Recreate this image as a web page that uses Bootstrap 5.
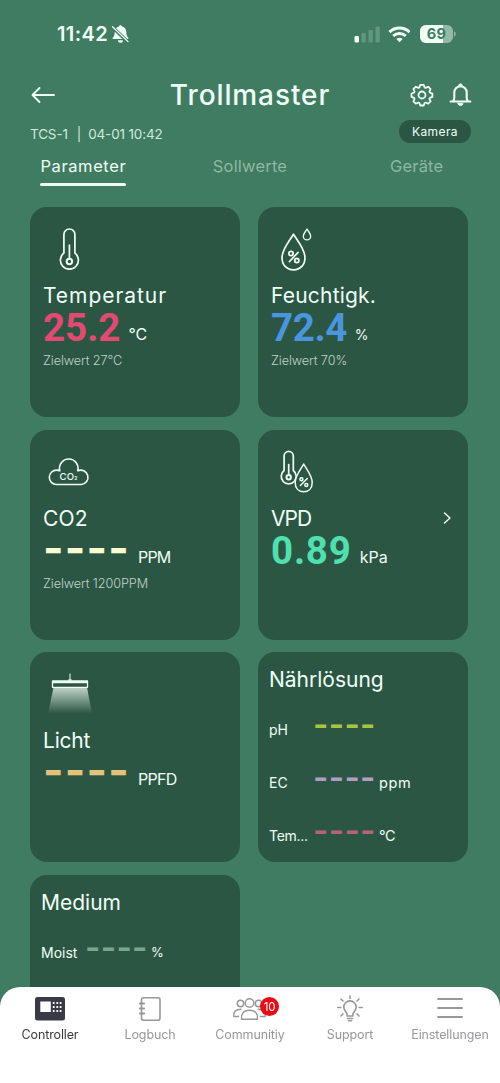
<!DOCTYPE html>
<html lang="de">
<head>
<meta charset="utf-8">
<meta name="viewport" content="width=device-width, initial-scale=1">
<title>Trollmaster</title>
<link href="https://cdn.jsdelivr.net/npm/bootstrap@5.3.0/dist/css/bootstrap.min.css" rel="stylesheet">
<style>
  body{background:#407c61;color:#effff6;font-family:Inter,"Open Sans",sans-serif;height:1083px;overflow:hidden}
  svg{display:block;flex:none;fill:none;stroke:currentColor;stroke-linecap:round;stroke-linejoin:round}
  .statusbar{height:68px;padding:0 45px 0 57px}
  .clock{font-size:20px;font-weight:600;letter-spacing:.4px}
  .topbar{height:53px;display:grid;grid-template-columns:1fr auto 1fr;padding:0 28px 0 28px}
  .topbar h1{font-size:28px;font-weight:500;letter-spacing:.9px;line-height:1}
  .inforow{height:23px;margin-top:-1px;padding:0 29px 0 30px}
  .device{font-size:13.5px;color:#cfeadb;letter-spacing:-.15px;padding-top:6px}
  .pill{background:#2c5644;font-size:12px;letter-spacing:.4px;width:72px;height:23px}
  .tabs{height:64px;font-size:16.5px;color:#8db8a1}
  .tabs .nav-link{color:inherit;padding:11px 0 0;line-height:25px;letter-spacing:.2px}
  .tabs .nav-link.active{color:#effff6;letter-spacing:.6px}
  .tabs .nav-link.active::after{content:"";display:block;height:3px;width:86px;margin:4px auto 0;border-radius:2px;background:#effff6}
  .tiles{display:grid;grid-template-columns:210px 210px;grid-auto-rows:210px;gap:12.6px 18px;padding-left:30px}
  .tile{background:#2c5644;border-radius:17px;padding-left:13px}
  .tile.listed{padding-left:11px}
  .pict{height:76px;padding-top:13px}
  .tile h2{font-size:21px;font-weight:400;line-height:25px;margin:0}
  .tile.listed h2{padding-top:15px;margin-bottom:24px}
  .figure-row{height:40px;line-height:40px;font-size:37.5px;white-space:nowrap}
  .num{font-family:Roboto,Inter,sans-serif;font-size:38.5px;font-weight:700;line-height:0}
  .dashes{display:inline-block;width:87px;font-size:44px;font-weight:700;line-height:0;letter-spacing:1.150px}
  .unit{font-size:16px;margin-left:8px;line-height:0;position:relative;top:-1px}
  .goal{font-size:12.7px;font-weight:350;line-height:20px;margin-top:3px;color:#bdd3c7;letter-spacing:-.1px}
  .probe{height:26px;margin-bottom:26.7px;font-size:14px;line-height:27px}
  .probe .lab{width:44px}
  .probe .thin{font-size:33px;font-weight:600;width:63px;white-space:nowrap;line-height:17px;letter-spacing:.35px}
  .probe .u{font-size:14.5px;margin-left:3px}
  .appnav{height:96px;background:#fff;border-radius:20px 20px 0 0;color:#98989b}
  .appnav .nav-link{color:inherit;padding:7px 0 0;font-size:12.5px;line-height:20px;letter-spacing:-.12px}
  .appnav .nav-link.active{color:#3a3a40}
  .appnav svg{margin:0 auto 1px}
  .count{background:#ea0b14;color:#fff;width:19px;height:19px;left:calc(50% + 10px);top:10px;font-size:11.5px;letter-spacing:-.2px}
</style>
</head>
<body>
<div class="statusbar d-flex align-items-center">
  <span class="clock">11:42</span>
  <svg style="margin-left:3px" width="19" height="20" viewBox="0 0 19 20"><path d="M9.500 1.200a1.700 1.700 0 0 1 1.600 1.300c2.800.7 4.200 2.700 4.200 5.500 0 3 .7 4.400 2 5.800v1.200H1.700v-1.200c1.400-1.400 2-2.800 2-5.800 0-2.800 1.600-4.800 4.200-5.500A1.700 1.700 0 0 1 9.500 1.200zM7 16.300h5a2.500 2.500 0 0 1-5 0z" fill="currentColor" stroke="none"/><path d="M1.500 3.200 17 18" stroke="#407c61" stroke-width="3.400"/><path d="M1.500 2.800 17 17.600" stroke-width="1.300"/></svg>
  <svg class="ms-auto" width="26" height="18" viewBox="0 0 26 18"><g fill="currentColor" stroke="none"><rect x="0.500" y="11" width="4.500" height="6.500" rx="1.200"/><g opacity=".2"><rect x="7.500" y="8" width="4.300" height="9.500" rx="1.200"/><rect x="14.500" y="5" width="4.300" height="12.500" rx="1.200"/><rect x="21.500" y="1.500" width="4.300" height="16" rx="1.200"/></g></g></svg>
  <svg style="margin-left:8px" width="23" height="17" viewBox="0 0 22 17" stroke-width="2.900"><path d="M1 6.100a14.300 14.300 0 0 1 20 0M4.700 10a9 9 0 0 1 12.600 0" stroke-linecap="butt"/><path d="M11 16.300 7.900 13.100a4.500 4.500 0 0 1 6.200 0z" fill="currentColor" stroke="none"/></svg>
  <svg style="margin-left:9px;margin-right:-1px" width="36" height="18" viewBox="0 0 36 18"><g stroke="none"><path d="M6 0h21a6 6 0 0 1 6 6v6a6 6 0 0 1-6 6H6a6 6 0 0 1-6-6V6a6 6 0 0 1 6-6z" fill="#94b9a6"/><path d="M6 0h17v18H6a6 6 0 0 1-6-6V6a6 6 0 0 1 6-6z" fill="#effff6"/><path d="M34 6.300c2.200.6 2.200 4.800 0 5.400z" fill="#94b9a6"/><text x="16.600" y="14.300" text-anchor="middle" font-size="14.500" font-weight="650" letter-spacing=".4" fill="#407c61">69</text></g></svg>
</div>

<header class="topbar align-items-center">
  <svg style="margin-left:3px" width="24" height="18" viewBox="0 0 24 18" stroke-width="1.900"><path d="M23 9H1.500M8.500 2 1.500 9l7 7"/></svg>
  <h1 class="m-0">Trollmaster</h1>
  <div class="d-flex justify-content-end">
    <svg width="24" height="24" viewBox="0 0 24 24" stroke-width="1.800"><circle cx="12" cy="12" r="3.500"/><path d="M10.300 1.800h3.400l.9 2.600 1.100.5 2.500-1.200 2.400 2.400-1.200 2.500.5 1.100 2.500.8v3.400l-2.500.9-.5 1.100 1.200 2.400-2.400 2.400-2.500-1.200-1.100.5-.9 2.500h-3.400l-.9-2.500-1.100-.5-2.500 1.200-2.400-2.400 1.200-2.400-.5-1.100-2.600-.9v-3.400l2.600-.8.5-1.100-1.200-2.500 2.400-2.400 2.500 1.200 1.100-.5z"/></svg>
    <svg style="margin-left:15px" width="23" height="24" viewBox="0 0 23 24" stroke-width="2.100"><path d="M1.600 18.500h19.800M4 18.300c.9-1.200 1.300-2 1.300-3.500V9.500a6.200 6.200 0 0 1 12.400 0v5.300c0 1.500.4 2.300 1.300 3.500"/><path d="M9.700 2.600a1.800 1.800 0 0 1 3.600 0zM9 20.300h5a2.500 2.300 0 0 1-5 0z" fill="currentColor" stroke-width=".8"/></svg>
  </div>
</header>

<div class="inforow d-flex justify-content-between">
  <div class="device lh-1 d-flex align-items-center"><span>TCS-1</span><span style="margin:0 7px 0 9px">|</span><span>04-01 10:42</span></div>
  <span class="pill rounded-pill d-flex align-items-center justify-content-center">Kamera</span>
</div>

<nav class="tabs nav row g-0 text-center">
  <a class="nav-link active col-4">Parameter</a>
  <a class="nav-link col-4">Sollwerte</a>
  <a class="nav-link col-4">Geräte</a>
</nav>

<main class="tiles">
  <section class="tile">
    <div class="pict"><svg width="56" height="60" viewBox="0 0 56 60" stroke-width="1.700"><path d="M20.900 33V14.500a5.500 5.500 0 0 1 11 0V33a9 9 0 1 1-11 0z"/><path d="M26.400 25v12.500"/><circle cx="26.400" cy="41.500" r="2.700" stroke-width="2"/></svg></div>
    <h2 style="letter-spacing:.95px">Temperatur</h2>
    <div class="figure-row"><span class="num" style="color:#e44a71">25.2</span><span class="unit">°C</span></div>
    <div class="goal">Zielwert 27°C</div>
  </section>

  <section class="tile">
    <div class="pict"><svg width="56" height="60" viewBox="0 0 56 60" stroke-width="1.700"><path d="M22.500 14.200C26.500 21 34 29 34 37.800c0 7-4.500 12-11.500 12s-11.500-5-11.500-12C11 29 18.500 21 22.500 14.200z"/><path d="M36 9c1.200 2.500 3.700 4.400 3.700 7.200a3.700 3.700 0 0 1-7.400 0C32.300 13.400 34.800 11.500 36 9z" stroke-width="1.300"/><g stroke-width="1.800"><circle cx="20" cy="33.500" r="2.100"/><circle cx="25.800" cy="40.600" r="2.100"/><path d="M27 32.500 18.500 41.500"/></g></svg></div>
    <h2 style="letter-spacing:.2px">Feuchtigk.</h2>
    <div class="figure-row"><span class="num" style="color:#4a95df;letter-spacing:-.4px">72.4</span><span class="unit" style="font-size:14px">%</span></div>
    <div class="goal">Zielwert 70%</div>
  </section>

  <section class="tile">
    <div class="pict"><svg width="56" height="60" viewBox="0 0 56 60" stroke-width="1.600"><path d="M13.500 41.500a7.200 7.200 0 0 1 0-14.400c1.200 0 2.300.2 3.300.7a9.300 9.300 0 1 1 17.900 0 7.200 7.200 0 1 1 3.600 13.700z"/><text x="16.600" y="37" font-size="9.600" font-weight="500" fill="currentColor" stroke="none">CO</text><text x="31.200" y="36.500" font-size="5" font-weight="700" fill="currentColor" stroke="none">2</text></svg></div>
    <h2 style="letter-spacing:.2px">CO2</h2>
    <div class="figure-row"><span class="dashes" style="color:#fbfbd2">----</span><span class="unit" style="letter-spacing:-.8px">PPM</span></div>
    <div class="goal">Zielwert 1200PPM</div>
  </section>

  <section class="tile">
    <div class="pict"><svg width="56" height="60" viewBox="0 0 56 60" stroke-width="1.700"><path d="M13.100 27.500V13a4.600 4.600 0 0 1 9.200 0v14.500a7.500 7.500 0 1 1-9.200 0z"/><path d="M17.700 21.500v10"/><circle cx="17.700" cy="34.200" r="2.200" stroke-width="2"/><path d="M32.700 21c2.700 5.200 8.500 11.200 8.500 18.500 0 5.700-3.300 9.300-8.500 9.300s-8.500-3.600-8.500-9.300C24.200 32.200 30 26.200 32.700 21z" fill="#2c5644" stroke-width="1.500"/><g stroke-width="1.500"><circle cx="30.400" cy="36.200" r="1.500"/><circle cx="35.300" cy="42" r="1.500"/><path d="M36.300 35.500 29.400 42.500"/></g></svg></div>
    <div class="d-flex align-items-center justify-content-between"><h2 style="letter-spacing:-1px">VPD</h2><svg style="margin-right:16px" width="10" height="14" viewBox="0 0 10 14" stroke-width="1.400"><path d="M2.500 2 8 7l-5.500 5"/></svg></div>
    <div class="figure-row"><span class="num" style="color:#4fe0b0;letter-spacing:.8px">0.89</span><span class="unit">kPa</span></div>
  </section>

  <section class="tile">
    <div class="pict"><svg width="56" height="60" viewBox="0 0 56 60" stroke-width="1.500"><defs><linearGradient id="beam" x1="0" y1="0" x2="0" y2="1"><stop offset="0" stop-color="#e8f5ee" stop-opacity=".78"/><stop offset="1" stop-color="#e8f5ee" stop-opacity="0"/></linearGradient></defs><path d="M10.500 22.500h33.500L49 48.500H5z" fill="url(#beam)" stroke="none"/><path d="M9.500 16h35v6.300h-35zM10 17.500h34" stroke-width="1.300"/><path d="M27 9v6M25.500 15h3" stroke-width="1"/></svg></div>
    <h2 style="letter-spacing:-.2px">Licht</h2>
    <div class="figure-row"><span class="dashes" style="color:#e3c377">----</span><span class="unit" style="letter-spacing:-.7px">PPFD</span></div>
  </section>

  <section class="tile listed">
    <h2>Nährlösung</h2>
    <div class="probe d-flex"><span class="lab">pH</span><span class="thin" style="color:#a9c63a">----</span></div>
    <div class="probe d-flex"><span class="lab">EC</span><span class="thin" style="color:#b39cc3">----</span><span class="u" style="letter-spacing:.6px">ppm</span></div>
    <div class="probe d-flex"><span class="lab" style="letter-spacing:-.3px">Tem...</span><span class="thin" style="color:#b5637a">----</span><span class="u" style="letter-spacing:-.5px">°C</span></div>
  </section>

  <section class="tile listed">
    <h2>Medium</h2>
    <div class="probe d-flex"><span class="lab">Moist</span><span class="thin" style="color:#7ba68d">----</span><span class="u" style="font-size:13px">%</span></div>
  </section>
</main>

<nav class="appnav nav fixed-bottom row g-0 text-center flex-nowrap">
  <a class="nav-link active col">
    <svg width="30" height="30" viewBox="0 0 30 30"><g stroke="none"><rect x="0" y="3" width="30" height="23.500" rx="2.500" fill="#3a3a44"/><path d="M5.300 7.500h10.500v10.500H5.300z" fill="#fff"/></g><path d="M18.700 8v10M22.300 8v10M25.600 8v10" stroke="#fff" stroke-width="1.700" stroke-linecap="butt" stroke-dasharray="2 2"/></svg>Controller</a>
  <a class="nav-link col">
    <svg width="30" height="30" viewBox="0 0 30 30" stroke-width="1.600"><rect x="6.500" y="3.800" width="18.500" height="22.400" rx="2"/><path d="M4.800 9.500h4.400M4.800 14.500h4.400M4.800 19.500h4.400" stroke-width="1.800"/></svg>Logbuch</a>
  <a class="nav-link col position-relative">
    <svg width="36" height="30" viewBox="0 0 36 30" stroke-width="1.500"><circle cx="8.500" cy="9.500" r="3.200"/><circle cx="17.500" cy="9" r="4.300"/><circle cx="26.500" cy="9.500" r="3.200"/><path d="M9.500 25.200c-.5-5.500 2-9 8-9s8.500 3.500 8 9zM6.500 22.500H1.800c-.5-5 2-7.300 7-7.300M28.500 22.500h4.700c.5-5-2-7.300-7-7.300"/></svg>Communitiy
    <span class="count position-absolute rounded-circle d-flex align-items-center justify-content-center">10</span></a>
  <a class="nav-link col">
    <svg width="30" height="30" viewBox="0 0 30 30" stroke-width="1.600"><path d="M12.200 22v-1.500c0-2-3.400-3.600-3.400-7.400a6.200 6.200 0 0 1 12.400 0c0 3.800-3.400 5.400-3.400 7.400V22z"/><path d="M12.700 24.500h4.600M13.500 26.800h3M15 2v2.500M2.800 13.500h3M24.200 13.500h3M6 5l2 2M24 5l-2 2M6 22l2-2.200M24 22l-2-2.200"/></svg>Support</a>
  <a class="nav-link col">
    <svg width="30" height="30" viewBox="0 0 30 30" stroke-width="1.900"><path d="M3 5h24M3 14h24M3 23h24"/></svg>Einstellungen</a>
</nav>
<script src="https://cdn.jsdelivr.net/npm/bootstrap@5.3.0/dist/js/bootstrap.bundle.min.js"></script>
</body>
</html>
